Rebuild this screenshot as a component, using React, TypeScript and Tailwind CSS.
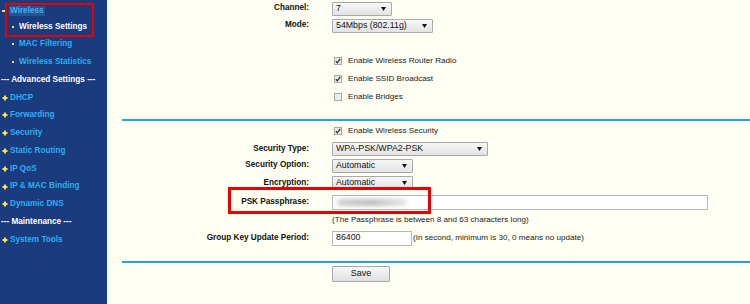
import React from "react";

const FONT = { fontFamily: '"Liberation Sans", Arial, sans-serif' };

type NavItem = { t: string; kind: "open" | "sub" | "head" | "top"; active?: boolean };

const nav: NavItem[] = [
  { t: "Wireless", kind: "open" },
  { t: "Wireless Settings", kind: "sub", active: true },
  { t: "MAC Filtering", kind: "sub" },
  { t: "Wireless Statistics", kind: "sub" },
  { t: "--- Advanced Settings ---", kind: "head" },
  { t: "DHCP", kind: "top" },
  { t: "Forwarding", kind: "top" },
  { t: "Security", kind: "top" },
  { t: "Static Routing", kind: "top" },
  { t: "IP QoS", kind: "top" },
  { t: "IP & MAC Binding", kind: "top" },
  { t: "Dynamic DNS", kind: "top" },
  { t: "--- Maintenance ---", kind: "head" },
  { t: "System Tools", kind: "top" },
];

function Plus() {
  return (
    <svg width="6" height="6" viewBox="0 0 6 6" className="shrink-0">
      <rect x="2" y="0.5" width="2" height="5" fill="#f3e24a" />
      <rect x="0.5" y="2" width="5" height="2" fill="#f3e24a" />
    </svg>
  );
}

function Sidebar() {
  return (
    <div className="relative w-[107px] shrink-0 h-[304px] bg-[#1a3b7d] text-[8.2px] font-bold" style={FONT}>
      {nav.map((n, i) => (
        <div
          key={n.t}
          className={"h-[17.77px] flex items-center whitespace-nowrap " + (i === 0 ? "pt-[4px]" : "")}
        >
          {n.kind === "open" && (
            <>
              <span className="ml-[2px] w-[5px] h-[2px] bg-[#f3e24a]" />
              <span className="ml-[2px] px-[1px] leading-[10px] bg-[#2c5193] text-[#3ab6f5]">
                {n.t}
              </span>
            </>
          )}
          {n.kind === "sub" && (
            <>
              <span className="ml-[12px] w-[2px] h-[2px] bg-[#f3e24a]" />
              <span className={"ml-[5px] " + (n.active ? "text-white" : "text-[#2ab0f2]")}>{n.t}</span>
            </>
          )}
          {n.kind === "head" && <span className="ml-[1px] text-white">{n.t}</span>}
          {n.kind === "top" && (
            <>
              <span className="ml-[2px]">
                <Plus />
              </span>
              <span className="ml-[2px] text-[#2ab0f2]">{n.t}</span>
            </>
          )}
        </div>
      ))}
      <div className="absolute left-[5px] top-[3px] w-[89px] h-[34px] border-[2.5px] border-[#e60000]" />
    </div>
  );
}

function Arrow() {
  return (
    <svg width="5" height="4" viewBox="0 0 5 4" className="shrink-0">
      <polygon points="0,0 5,0 2.5,4" fill="#111" />
    </svg>
  );
}

function Select({ value, w }: { value: string; w: string }) {
  return (
    <div
      className={
        w +
        " h-[14px] flex items-center justify-between pl-[3px] pr-[5px] border border-[#a9a9a9] bg-gradient-to-b from-[#f7f7f7] to-[#e3e3e3] text-[8.8px] text-[#111] rounded-[1px]"
      }
    >
      <span className="whitespace-nowrap">{value}</span>
      <Arrow />
    </div>
  );
}

function Check({ on }: { on: boolean }) {
  return (
    <svg width="8" height="8" viewBox="0 0 8 8" className="shrink-0">
      <rect x="0.5" y="0.5" width="7" height="7" fill="#ececec" stroke="#a8a8a8" />
      {on && <path d="M1.8 4.2 L3.3 5.8 L6.3 1.8" stroke="#333" strokeWidth="1.3" fill="none" />}
    </svg>
  );
}

function Row({ label, h, children }: { label?: string; h: string; children?: React.ReactNode }) {
  return (
    <div className={"grid grid-cols-[202px_1fr] gap-x-[23px] items-center " + h}>
      <div className="text-right font-bold text-[8.2px] text-[#111] whitespace-nowrap">{label}</div>
      <div className="flex items-center">{children}</div>
    </div>
  );
}

function CheckRow({ on, text, h }: { on: boolean; text: string; h: string }) {
  return (
    <Row h={h}>
      <div className="flex items-center gap-[6px] pl-[2px] text-[8.1px] text-[#222]">
        <Check on={on} />
        <span>{text}</span>
      </div>
    </Row>
  );
}

function Main() {
  return (
    <div className="relative flex-1 h-[304px] bg-[#fefef2] flex flex-col" style={FONT}>
      <Row label="Channel:" h="h-[17px]">
        <Select value="7" w="w-[60px]" />
      </Row>
      <Row label="Mode:" h="h-[17px]">
        <Select value="54Mbps (802.11g)" w="w-[101px]" />
      </Row>
      <div className="h-[18px]" />
      <CheckRow on text="Enable Wireless Router Radio" h="h-[18px]" />
      <CheckRow on text="Enable SSID Broadcast" h="h-[18px]" />
      <CheckRow on={false} text="Enable Bridges" h="h-[18px]" />
      <div className="h-[13px]" />
      <div className="ml-[15px] h-[2px] bg-[#2ba3d8]" />
      <CheckRow on text="Enable Wireless Security" h="h-[20px]" />
      <Row label="Security Type:" h="h-[16px]">
        <Select value="WPA-PSK/WPA2-PSK" w="w-[156px]" />
      </Row>
      <Row label="Security Option:" h="h-[17px]">
        <Select value="Automatic" w="w-[81px]" />
      </Row>
      <Row label="Encryption:" h="h-[18px]">
        <Select value="Automatic" w="w-[81px]" />
      </Row>
      <Row label="PSK Passphrase:" h="h-[21px]">
        <div className="w-[376px] h-[15px] bg-white border border-[#b8b8b8] flex items-center pl-[4px]">
          <div className="w-[70px] h-[7px] bg-gradient-to-r from-[#cfcfcf] via-[#bdbdbd] to-[#e6e6e6] blur-[2px] rounded-sm" />
        </div>
      </Row>
      <Row h="h-[14px]">
        <span className="text-[8.1px] text-[#222] whitespace-nowrap">(The Passphrase is between 8 and 63 characters long)</span>
      </Row>
      <Row label="Group Key Update Period:" h="h-[22px]">
        <div className="w-[80px] h-[15px] bg-white border border-[#b8b8b8] flex items-center pl-[3px] text-[8.8px] text-[#111]">
          86400
        </div>
        <span className="ml-[1px] text-[8.1px] text-[#222] whitespace-nowrap">(In second, minimum is 30, 0 means no update)</span>
      </Row>
      <div className="h-[12px]" />
      <div className="ml-[15px] h-[2px] bg-[#2ba3d8]" />
      <div className="h-[3px]" />
      <Row h="h-[16px]">
        <div className="w-[58px] h-[16px] flex items-center justify-center border border-[#a9a9a9] bg-gradient-to-b from-[#f7f7f7] to-[#e0e0e0] text-[9px] text-[#111] rounded-[1px]">
          Save
        </div>
      </Row>
      <div className="absolute left-[121px] top-[187px] w-[203px] h-[27px] border-[3px] border-[#e60000]" />
    </div>
  );
}

export default function App() {
  return (
    <div className="w-[750px] h-[304px] flex overflow-hidden">
      <Sidebar />
      <Main />
    </div>
  );
}
